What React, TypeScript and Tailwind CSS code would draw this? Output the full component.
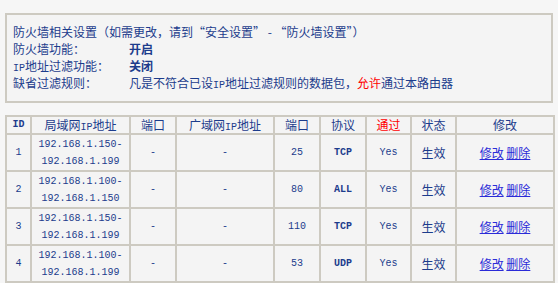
const navy = "text-[#1c3c8c]";

function Mono({ children, bold }: { children: React.ReactNode; bold?: boolean }) {
  return (
    <span className={`font-['Liberation_Mono',monospace] text-[10px] leading-none ${bold ? "font-bold" : ""}`}>
      {children}
    </span>
  );
}

type Rule = {
  id: number;
  lanFrom: string;
  lanTo: string;
  port: string;
  proto: string;
};

const rules: Rule[] = [
  { id: 1, lanFrom: "192.168.1.150-", lanTo: "192.168.1.199", port: "25", proto: "TCP" },
  { id: 2, lanFrom: "192.168.1.100-", lanTo: "192.168.1.150", port: "80", proto: "ALL" },
  { id: 3, lanFrom: "192.168.1.150-", lanTo: "192.168.1.199", port: "110", proto: "TCP" },
  { id: 4, lanFrom: "192.168.1.100-", lanTo: "192.168.1.199", port: "53", proto: "UDP" },
];

const cell = "border-2 border-[#cdcac1] text-center align-middle p-0 leading-[14px]";
const monoCell = `${cell} font-['Liberation_Mono',monospace] text-[10px]`;

export default function App() {
  return (
    <div
      className={`w-[558px] h-[283px] overflow-hidden bg-[#f6f6f6] pt-[13px] px-[5px] text-[12px] leading-[17px] ${navy} font-['Noto_Sans_CJK_SC','Noto_Sans',sans-serif]`}
    >
      <div className="h-[90px] border-2 border-[#cdcac1] bg-[#f4f4f4] pl-[6px] pt-[8px]">
        <p>防火墙相关设置（如需更改，请到“安全设置” - “防火墙设置”）</p>
        <div className="flex">
          <span className="w-[116px]">防火墙功能：</span>
          <span className="font-bold">开启</span>
        </div>
        <div className="flex">
          <span className="w-[116px]">
            <Mono>IP</Mono>地址过滤功能：
          </span>
          <span className="font-bold">关闭</span>
        </div>
        <div className="flex">
          <span className="w-[116px]">缺省过滤规则：</span>
          <span>
            凡是不符合已设<Mono>IP</Mono>地址过滤规则的数据包，
            <span className="text-[#ff0000]">允许</span>通过本路由器
          </span>
        </div>
      </div>

      <table className="mt-[12px] w-[548px] table-fixed border-collapse bg-[#f4f4f4]">
        <colgroup>
          <col className="w-[25px]" />
          <col className="w-[99px]" />
          <col className="w-[46px]" />
          <col className="w-[98px]" />
          <col className="w-[46px]" />
          <col className="w-[46px]" />
          <col className="w-[45px]" />
          <col className="w-[45px]" />
          <col className="w-[98px]" />
        </colgroup>
        <thead>
          <tr className="h-[18px]">
            <th className={`${monoCell} font-bold`}>ID</th>
            <th className={`${cell} font-normal`}>
              局域网<Mono>IP</Mono>地址
            </th>
            <th className={`${cell} font-normal`}>端口</th>
            <th className={`${cell} font-normal`}>
              广域网<Mono>IP</Mono>地址
            </th>
            <th className={`${cell} font-normal`}>端口</th>
            <th className={`${cell} font-normal`}>协议</th>
            <th className={`${cell} font-normal text-[#ff0000]`}>通过</th>
            <th className={`${cell} font-normal`}>状态</th>
            <th className={`${cell} font-normal`}>修改</th>
          </tr>
        </thead>
        <tbody>
          {rules.map((r) => (
            <tr key={r.id} className="h-[37px]">
              <td className={monoCell}>{r.id}</td>
              <td className={`${monoCell} leading-[17px]`}>
                {r.lanFrom}
                <br />
                {r.lanTo}
              </td>
              <td className={monoCell}>-</td>
              <td className={monoCell}>-</td>
              <td className={monoCell}>{r.port}</td>
              <td className={`${monoCell} font-bold`}>{r.proto}</td>
              <td className={monoCell}>Yes</td>
              <td className={cell}>生效</td>
              <td className={cell}>
                <a href="#" className="text-[#2b2bd8] underline">
                  修改
                </a>{" "}
                <a href="#" className="text-[#2b2bd8] underline">
                  删除
                </a>
              </td>
            </tr>
          ))}
        </tbody>
      </table>
    </div>
  );
}
